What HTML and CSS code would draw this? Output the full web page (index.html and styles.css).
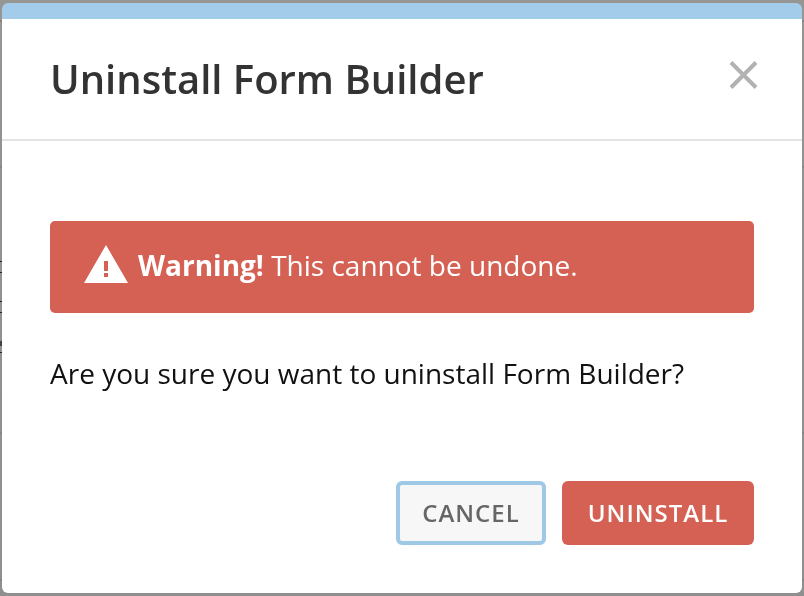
FILE: index.html
```html
<!DOCTYPE html>
<html lang="en">
<head>
<meta charset="utf-8">
<title>Uninstall Form Builder</title>
<link rel="stylesheet" href="styles.css">
</head>
<body>
<div class="page-text" aria-hidden="true">
  <i class="mark m1"></i><i class="mark m2"></i><i class="mark m3"></i><i class="mark m4"></i><i class="mark m5"></i><i class="mark m6"></i>
  <i class="rule r1"></i><i class="rule r2"></i><i class="rule r3"></i><i class="rule r4"></i>
</div>
<div class="modal" role="dialog">
  <header class="modal-header">
    <h1>Uninstall Form Builder</h1>
    <svg class="close" width="30" height="30" viewBox="0 0 30 30"><path d="M3 2.5 28 27.5M28 2.5 3 27.5"/></svg>
  </header>
  <div class="modal-body">
    <div class="alert">
      <svg class="warn" width="44" height="38" viewBox="0 0 44 38"><path fill-rule="evenodd" d="M22 0 44 38H0ZM20 16V26H24V16ZM20 28V32H24V28Z"/></svg>
      <p><strong>Warning!</strong> This cannot be undone.</p>
    </div>
    <p class="question">Are you sure you want to uninstall Form Builder?</p>
  </div>
  <footer class="modal-footer">
    <button class="btn cancel">CANCEL</button>
    <button class="btn danger">UNINSTALL</button>
  </footer>
</div>
</body>
</html>
```

FILE: styles.css
```css
* { box-sizing: border-box; margin: 0; padding: 0; }
body {
  width: 804px;
  height: 596px;
  padding: 3px 2px;
  overflow: hidden;
  background: linear-gradient(#989693, #929292 25%, #8f8f8f);
  font-family: "Open Sans", sans-serif;
}
/* slivers of the dimmed page behind the dialog */
.mark, .rule { position: absolute; left: 0; height: 2px; }
.mark { width: 2px; height: 1px; background: #222; }
.rule { width: 804px; background: #858585; }
.m1 { top: 261px; }
.m2 { top: 272px; }
.m3 { top: 301px; }
.m4 { top: 312px; }
.m5 { top: 341px; height: 5px; opacity: .7; }
.m6 { top: 352px; }
.r1 { top: 20px; }
.r2 { top: 166px; }
.r3 { top: 432px; }
.r4 { top: 579px; }
.modal {
  position: relative;
  display: flex;
  flex-direction: column;
  width: 800px;
  height: 590px;
  border-top: 16px solid #a3cbea;
  border-radius: 6px;
  background: #fff;
  will-change: transform;
}
.modal-header {
  display: flex;
  justify-content: space-between;
  align-items: center;
  height: 122px;
  padding: 0 44px 0 48px;
  border-bottom: 2px solid #e3e3e3;
}
h1 { color: #333; font-size: 40px; font-weight: 600; line-height: 54px; }
.close { margin-bottom: 8px; fill: none; stroke: #b2b2b2; stroke-width: 4; }
.modal-body { flex: 1; padding: 80px 48px 0; font-size: 28px; line-height: 42px; color: #111; }
.alert {
  display: flex;
  align-items: center;
  gap: 10px;
  height: 92px;
  padding: 0 34px;
  border-radius: 5px;
  background: #d46154;
  color: #fff;
}
.warn { margin-bottom: 6px; fill: #fff; }
.alert p { margin-bottom: 4px; }
.question { margin-top: 39px; }
.modal-footer { display: flex; justify-content: flex-end; gap: 16px; padding: 0 48px 48px; }
.btn {
  height: 64px;
  border: 0;
  border-radius: 6px;
  font: 600 24px/64px "Open Sans", sans-serif;
  letter-spacing: 1px;
}
.cancel { width: 150px; border: 4px solid #9fc8e6; background: #f7f7f7; color: #666; line-height: 56px; }
.danger { width: 192px; background: #d46154; color: #fff; }
```
